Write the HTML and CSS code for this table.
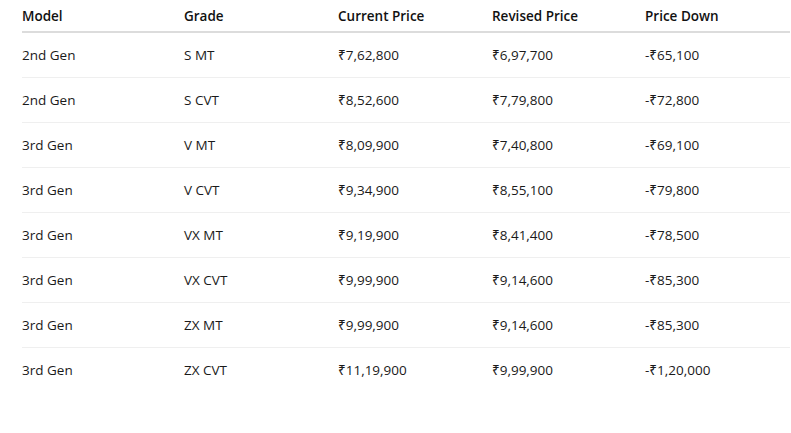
FILE: index.html
```html
<!DOCTYPE html>
<html>
<head>
<meta charset="utf-8">
<link rel="stylesheet" href="styles.css">
</head>
<body>
<div class="wrap">
<table class="prices">
<colgroup>
<col class="c1"><col class="c2"><col class="c3"><col class="c4"><col class="c5">
</colgroup>
<thead>
<tr><th>Model</th><th>Grade</th><th>Current Price</th><th>Revised Price</th><th>Price Down</th></tr>
</thead>
<tbody>
<tr><td>2nd Gen</td><td>S MT</td><td>₹7,62,800</td><td>₹6,97,700</td><td>-₹65,100</td></tr>
<tr><td>2nd Gen</td><td>S CVT</td><td>₹8,52,600</td><td>₹7,79,800</td><td>-₹72,800</td></tr>
<tr><td>3rd Gen</td><td>V MT</td><td>₹8,09,900</td><td>₹7,40,800</td><td>-₹69,100</td></tr>
<tr><td>3rd Gen</td><td>V CVT</td><td>₹9,34,900</td><td>₹8,55,100</td><td>-₹79,800</td></tr>
<tr><td>3rd Gen</td><td>VX MT</td><td>₹9,19,900</td><td>₹8,41,400</td><td>-₹78,500</td></tr>
<tr><td>3rd Gen</td><td>VX CVT</td><td>₹9,99,900</td><td>₹9,14,600</td><td>-₹85,300</td></tr>
<tr><td>3rd Gen</td><td>ZX MT</td><td>₹9,99,900</td><td>₹9,14,600</td><td>-₹85,300</td></tr>
<tr><td>3rd Gen</td><td>ZX CVT</td><td>₹11,19,900</td><td>₹9,99,900</td><td>-₹1,20,000</td></tr>
</tbody>
</table>
</div>
</body>
</html>
```
FILE: styles.css
```css
html, body {
  margin: 0;
  padding: 0;
  background: #fff;
}
.wrap {
  padding-left: 22px;
}
.prices {
  width: 768px;
  border-collapse: collapse;
  table-layout: fixed;
  font-family: "Open Sans", "Noto Sans", sans-serif;
  font-size: 13.5px;
  color: #1a1a1a;
}
.c1 { width: 162px; }
.c2 { width: 154px; }
.c3 { width: 154px; }
.c4 { width: 153px; }
.c5 { width: 145px; }
.prices th {
  text-align: left;
  font-weight: 600;
  height: 31px;
  padding: 0;
  border-bottom: 2px solid #dcdcdc;
  color: #111;
}
.prices td {
  height: 44px;
  padding: 0;
  border-bottom: 1px solid #efefef;
}
.prices tbody tr:last-child td {
  border-bottom: none;
}
```
